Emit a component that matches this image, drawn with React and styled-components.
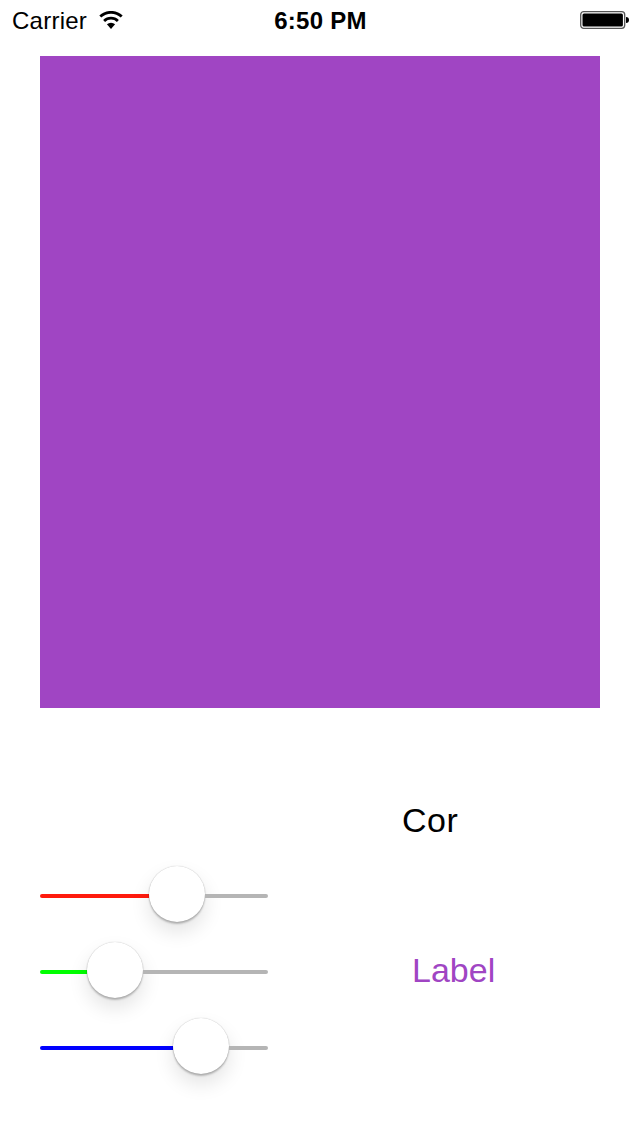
import React from "react";
import styled, { createGlobalStyle } from "styled-components";

const Global = createGlobalStyle`
  html, body { margin: 0; padding: 0; background: #fff; }
  body { font-family: "Liberation Sans", Arial, sans-serif; }
`;

const Screen = styled.div`
  width: 640px;
  height: 1136px;
  display: flex;
  flex-direction: column;
  background: #fff;
  overflow: hidden;
`;

const StatusBar = styled.div`
  height: 40px;
  padding: 0 11px 0 12px;
  display: grid;
  grid-template-columns: 1fr auto 1fr;
  align-items: center;
  color: #000;
  font-size: 24px;
`;

const StatusLeft = styled.div`
  display: flex;
  align-items: center;
  gap: 12px;
`;

const Carrier = styled.span`
  letter-spacing: 0.25px;
  padding-top: 2px;
`;

const Clock = styled.span`
  font-weight: 700;
  letter-spacing: 0.25px;
  padding-top: 2px;
`;

const StatusRight = styled.div`
  display: flex;
  justify-content: flex-end;
`;

const Swatch = styled.div`
  height: 652px;
  margin: 16px 40px 0;
  background: #a045c3;
`;

const Controls = styled.div`
  margin-top: 84px;
  padding-left: 40px;
  display: flex;
`;

const SliderColumn = styled.div`
  width: 228px;
  padding-top: 66px;
  display: flex;
  flex-direction: column;
`;

const SliderRow = styled.div`
  height: 76px;
  display: flex;
  align-items: center;
`;

const Fill = styled.div`
  height: 4px;
  width: ${(p) => p.$width}px;
  background: ${(p) => p.$color};
  border-radius: 2px 0 0 2px;
`;

const Rest = styled.div`
  height: 4px;
  flex: 1;
  background: #b5b5b5;
  border-radius: 0 2px 2px 0;
`;

const Thumb = styled.div`
  width: 56px;
  height: 56px;
  flex: none;
  margin-bottom: 4px;
  border-radius: 50%;
  background: #fff;
  box-shadow: 0 0 1px rgba(0, 0, 0, 0.3), 0 2px 2px rgba(0, 0, 0, 0.24), 0 10px 20px rgba(0, 0, 0, 0.11);
`;

const LabelColumn = styled.div`
  flex: 1;
`;

const Title = styled.div`
  font-size: 34px;
  line-height: 40px;
  margin: 8px 0 0 134px;
  letter-spacing: 0.5px;
  color: #000;
`;

const Value = styled.div`
  font-size: 34px;
  line-height: 40px;
  margin: 110px 0 0 144px;
  color: #a045c3;
`;

const WifiIcon = () => (
  <svg width="24" height="18" viewBox="0 0 24 18" aria-hidden="true">
    <path d="M12 18 L7.9 13.3 A6 6 0 0 1 16.1 13.3 Z" fill="#000" />
    <path d="M5.1 9.9 A10 10 0 0 1 18.9 9.9" fill="none" stroke="#000" strokeWidth="2.8" />
    <path d="M1.3 5.6 A15.5 15.5 0 0 1 22.7 5.6" fill="none" stroke="#000" strokeWidth="2.8" />
  </svg>
);

const BatteryIcon = () => (
  <svg width="49" height="20" viewBox="0 0 49 20" aria-hidden="true">
    <rect x="0.7" y="1.7" width="44" height="16.6" rx="3" fill="#fff" stroke="#555" strokeWidth="1.3" />
    <rect x="2.5" y="3.5" width="40.4" height="13" rx="1.5" fill="#000" />
    <path d="M46 7 A3 3 0 0 1 46 13 Z" fill="#000" />
  </svg>
);

const sliders = [
  { color: "#ff1a0d", width: 109 },
  { color: "#00ff00", width: 47 },
  { color: "#0000ff", width: 133 },
];

export default function App() {
  return (
    <Screen>
      <Global />
      <StatusBar>
        <StatusLeft>
          <Carrier>Carrier</Carrier>
          <WifiIcon />
        </StatusLeft>
        <Clock>6:50 PM</Clock>
        <StatusRight>
          <BatteryIcon />
        </StatusRight>
      </StatusBar>
      <Swatch />
      <Controls>
        <SliderColumn>
          {sliders.map((s) => (
            <SliderRow key={s.color}>
              <Fill $color={s.color} $width={s.width} />
              <Thumb />
              <Rest />
            </SliderRow>
          ))}
        </SliderColumn>
        <LabelColumn>
          <Title>Cor</Title>
          <Value>Label</Value>
        </LabelColumn>
      </Controls>
    </Screen>
  );
}
